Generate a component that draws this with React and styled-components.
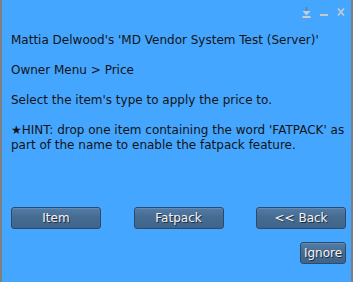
import React from "react";
import styled, { createGlobalStyle } from "styled-components";

const Global = createGlobalStyle`
  html, body { margin: 0; padding: 0; background: #44a6ff; }
  #root { width: 353px; height: 282px; }
`;

const Window = styled.div`
  box-sizing: border-box;
  width: 353px;
  height: 282px;
  background: #44a6ff;
  border-left: 2px solid #7f7f7f;
  border-right: 2px solid #7f7f7f;
  display: flex;
  flex-direction: column;
  font-family: "DejaVu Sans", sans-serif;
  overflow: hidden;
`;

const TitleBar = styled.div`
  height: 33px;
  display: flex;
  justify-content: flex-end;
  align-items: flex-start;
  padding: 7px 6px 0 0;
  box-sizing: border-box;
  gap: 9px;
`;

const Icon = styled.svg`
  display: block;
  width: ${(p) => p.$w}px;
  height: 11px;
`;

const Message = styled.div`
  padding: 0 6px 0 9px;
  font-size: 12px;
  line-height: 15px;
  color: #141414;
`;

const Para = styled.p`
  margin: 0 0 15px 0;
  white-space: pre-wrap;
`;

const Spacer = styled.div`
  flex: 1;
`;

const ButtonRow = styled.div`
  display: flex;
  justify-content: space-between;
  padding: 0 5px 0 9px;
`;

const IgnoreRow = styled.div`
  display: flex;
  justify-content: flex-end;
  padding: 13px 5px 18px 0;
`;

const Button = styled.button`
  box-sizing: border-box;
  width: ${(p) => p.$w}px;
  height: 22px;
  padding: 0;
  border: 1px solid #2b4b6c;
  border-radius: 3px;
  background: linear-gradient(#537ca6, #476c92 45%, #3f6389);
  box-shadow: inset 0 1px 0 rgba(255, 255, 255, 0.12);
  color: #f4f4f4;
  font-family: "DejaVu Sans", sans-serif;
  font-size: 12px;
  text-shadow: 1px 1px 0 #1d2d3d;
  cursor: pointer;
`;

export default function App() {
  return (
    <>
      <Global />
      <Window>
        <TitleBar>
          <Icon $w={9} viewBox="0 0 9 11">
            <rect x="3.5" y="0" width="2" height="5" fill="#5b86b7" />
            <path d="M0.5 4 L8.5 4 L4.5 8.5 Z" fill="#c8cdd3" />
            <rect x="0.5" y="9" width="8" height="2" fill="#c8cdd3" />
          </Icon>
          <Icon $w={8} viewBox="0 0 8 11">
            <rect x="0" y="7" width="8" height="2" fill="#c4c8cc" />
          </Icon>
          <Icon $w={8} viewBox="0 0 8 11">
            <path d="M1 1.5 L7 8.5 M7 1.5 L1 8.5" stroke="#c4c8cc" strokeWidth="1.8" />
          </Icon>
        </TitleBar>
        <Message>
          <Para>Mattia Delwood's 'MD Vendor System Test (Server)'</Para>
          <Para>Owner Menu &gt; Price</Para>
          <Para>Select the item's type to apply the price to.</Para>
          <Para>★HINT: drop one item containing the word 'FATPACK' as part of the name to enable the fatpack feature.</Para>
        </Message>
        <Spacer />
        <ButtonRow>
          <Button $w={90}>Item</Button>
          <Button $w={90}>Fatpack</Button>
          <Button $w={90}>&lt;&lt; Back</Button>
        </ButtonRow>
        <IgnoreRow>
          <Button $w={46}>Ignore</Button>
        </IgnoreRow>
      </Window>
    </>
  );
}
